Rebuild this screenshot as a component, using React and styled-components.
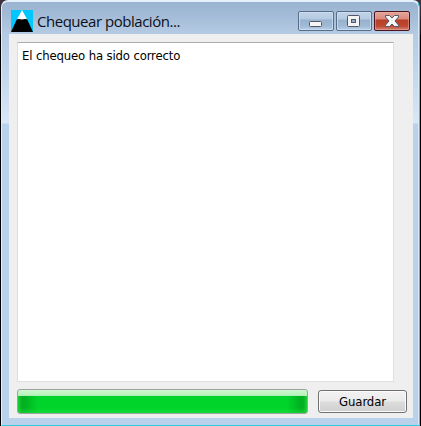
import React from "react";
import styled, { createGlobalStyle } from "styled-components";

const GlobalStyle = createGlobalStyle`
  *, *::before, *::after { box-sizing: border-box; }
  html, body { margin: 0; background: #000; overflow: hidden; }
`;

const WindowFrame = styled.main`
  width: 421px;
  height: 426px;
  padding: 0 1px 0 1px;
  background: linear-gradient(#3c3440 0 1px, #19151c 34px, #000 35px);
`;

const Glass = styled.div`
  height: 426px;
  display: flex;
  flex-direction: column;
  border: 1px solid #2ccbe4;
  border-top: 2px solid #e4f1fa;
  border-left-color: #e1edf8;
  border-radius: 7px 7px 0 0;
  padding: 0 6px 7px 7px;
  background: linear-gradient(#99b4d1 0, #a2bad6 12px, #b5cbe4 32px, #bdd3ea 60px, #dae7f5 121px, #b9d1ea 122px);
  box-shadow: inset -1px 0 #d8eaf7;
`;

const TitleBar = styled.header`
  height: 32px;
  flex: none;
  display: flex;
  align-items: flex-start;
  padding: 8px 3px 0 2px;
`;

const AppIcon = styled.svg`
  width: 22px;
  height: 22px;
  flex: none;
`;

const Title = styled.h1`
  margin: 0 auto 0 4px;
  font: 400 15px/23px "Open Sans", "Noto Sans", sans-serif;
  letter-spacing: -0.47px;
  color: #0c1018;
  white-space: nowrap;
`;

const Controls = styled.div`
  display: flex;
  gap: 2px;
  padding-top: 1px;
`;

const ControlButton = styled.button`
  width: 36px;
  height: 20px;
  padding: 0;
  display: flex;
  border: 1px solid ${({ $danger }) => ($danger ? "#4d1420" : "#596d88")};
  border-radius: 2px;
  background: ${({ $danger }) =>
    $danger
      ? "linear-gradient(#e6a69b 0, #d98a7c 7px, #b83d27 8px, #bd4830 14px, #d5857a 18px)"
      : "linear-gradient(#c0d3e8 0, #b5cae2 7px, #98b2ce 8px, #a0bad6 14px, #b9cfe7 18px)"};
  box-shadow: inset 0 0 0 1px ${({ $danger }) => ($danger ? "#e9b0a580" : "#d2e2f2b0")};

  svg { display: block; width: 34px; height: 18px; }
`;

const Client = styled.section`
  flex: 1;
  display: flex;
  flex-direction: column;
  gap: 7px;
  padding: 8px 5px 4px 8px;
  background: #efefef;
`;

const Output = styled.div`
  width: 377px;
  height: 340px;
  padding: 5px 4px;
  border: 1px solid #dddfe4;
  border-top-color: #abadb3;
  background: #fff;
  color: #000;
  font: 13px/16px "DejaVu Sans Condensed", "DejaVu Sans", sans-serif;
  letter-spacing: -0.15px;
`;

const Footer = styled.footer`
  display: flex;
  gap: 10px;
`;

const Progress = styled.div`
  width: 291px;
  height: 25px;
  border: 1px solid #9fa39f;
  border-radius: 3px;
  background:
    linear-gradient(#cdf8d0 0, #b8f2bd 5px, #a5edaf 6px, transparent 6px),
    linear-gradient(transparent 18px, #22df4099 23px),
    linear-gradient(90deg, #1bd136 0, #05ad22 4px, #00b421 8px, #00d42a 20px, #00d42a 269px, #00b421 281px, #05ad22 285px, #1bd136 289px);
`;

const SaveButton = styled.button`
  width: 89px;
  height: 23px;
  margin-top: 1px;
  padding: 0;
  border: 1px solid #707070;
  border-radius: 3px;
  background: linear-gradient(#f2f2f2 0, #ebebeb 10px, #dddddd 11px, #cfcfcf);
  box-shadow: inset 0 0 0 1px #fbfbfb;
  color: #000;
  font: 13px/20px "DejaVu Sans Condensed", "DejaVu Sans", sans-serif;
  letter-spacing: -0.1px;
`;

export default function App() {
  return (
    <>
      <GlobalStyle />
      <WindowFrame>
        <Glass>
          <TitleBar>
            <AppIcon viewBox="0 0 22 22" aria-hidden="true">
              <path fill="#00c8ff" d="M0 0h22v22H0z" />
              <path d="M0 22 6 9h10l6 13z" />
              <path fill="#fff" d="m11 0 5 9.3-2-.3-3 .4-3-.4-2 .3z" />
            </AppIcon>
            <Title>Chequear población...</Title>
            <Controls>
              <ControlButton aria-label="Minimizar">
                <svg viewBox="0 0 34 18"><rect x="10.5" y="9.5" width="12" height="5" rx="1" fill="#f5f5f5" stroke="#535666" /></svg>
              </ControlButton>
              <ControlButton aria-label="Maximizar">
                <svg viewBox="0 0 34 18">
                  <rect x="10.5" y="3.5" width="12" height="11" rx="1" fill="#f3f3f3" stroke="#535666" />
                  <rect x="14.5" y="7.5" width="4" height="3" fill="#8fabc9" stroke="#535666" />
                </svg>
              </ControlButton>
              <ControlButton $danger aria-label="Cerrar">
                <svg viewBox="0 0 34 18">
                  <path fill="#f5f5f5" stroke="#535666" strokeLinejoin="round" d="M10.5 3.5h4l2.5 2.5 2.5-2.5h4v1.5l-3.5 4 3.5 4v1.5h-4l-2.5-2.5-2.5 2.5h-4v-1.5l3.5-4-3.5-4z" />
                </svg>
              </ControlButton>
            </Controls>
          </TitleBar>
          <Client>
            <Output>El chequeo ha sido correcto</Output>
            <Footer>
              <Progress role="progressbar" aria-valuenow={100} />
              <SaveButton>Guardar</SaveButton>
            </Footer>
          </Client>
        </Glass>
      </WindowFrame>
    </>
  );
}
